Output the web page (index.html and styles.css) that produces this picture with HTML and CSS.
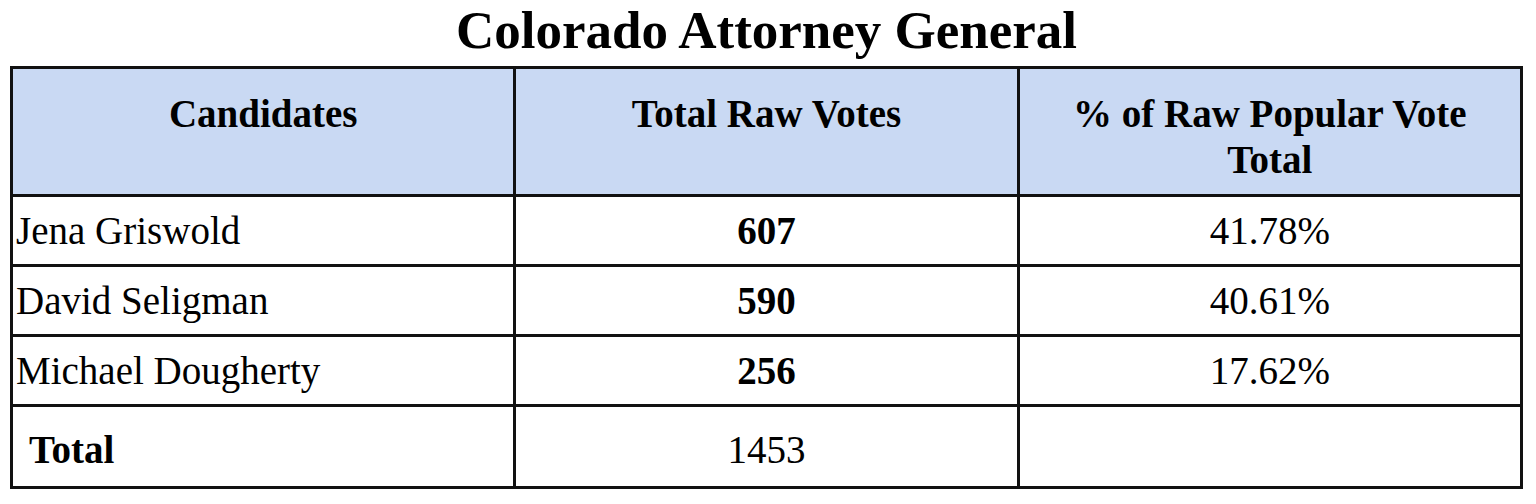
FILE: index.html
```html
<!DOCTYPE html>
<html lang="en">
<head>
    <meta charset="UTF-8">
    <meta name="viewport" content="width=device-width, initial-scale=1.0">
    <title>Colorado Attorney General</title>
    <link rel="stylesheet" href="styles.css">
</head>
<body>
    <h1 class="title">Colorado Attorney General</h1>
    <table class="results">
        <thead>
            <tr>
                <th>Candidates</th>
                <th>Total Raw Votes</th>
                <th>% of Raw Popular Vote<br>Total</th>
            </tr>
        </thead>
        <tbody>
            <tr>
                <td class="name">Jena Griswold</td>
                <td class="votes">607</td>
                <td class="pct">41.78%</td>
            </tr>
            <tr>
                <td class="name">David Seligman</td>
                <td class="votes">590</td>
                <td class="pct">40.61%</td>
            </tr>
            <tr>
                <td class="name">Michael Dougherty</td>
                <td class="votes">256</td>
                <td class="pct">17.62%</td>
            </tr>
            <tr class="total">
                <td class="name">Total</td>
                <td class="pct">1453</td>
                <td class="pct"></td>
            </tr>
        </tbody>
    </table>
</body>
</html>
```

FILE: styles.css
```css
body {
    margin: 0;
    padding: 0 13px 0 10px;
    background-color: #fff;
    color: #000;
    font-family: "Liberation Serif", "Times New Roman", serif;
}

.title {
    margin: 0;
    height: 66px;
    line-height: 60px;
    text-align: center;
    font-size: 53px;
    font-weight: bold;
}

.results {
    width: 100%;
    border-collapse: collapse;
    table-layout: fixed;
    font-size: 39px;
}

.results th,
.results td {
    border: 3px solid #111;
    padding: 0 3px;
}

.results th {
    background-color: #c9d9f3;
    height: 103px;
    vertical-align: top;
    padding-top: 22px;
    line-height: 46px;
    font-weight: bold;
}

.results td {
    height: 67px;
    line-height: 40px;
}

.name {
    text-align: left;
}

.votes {
    text-align: center;
    font-weight: bold;
}

.pct {
    text-align: center;
}

.total td {
    height: 73px;
    padding-top: 6px;
}

.total .name {
    font-weight: bold;
    padding-left: 16px;
}
```
